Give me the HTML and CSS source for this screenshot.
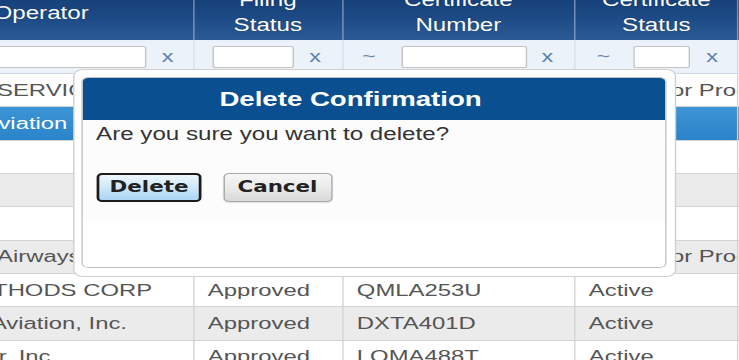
FILE: index.html
```html
<!DOCTYPE html>
<html lang="en">
<head>
<meta charset="utf-8">
<title>Operators</title>
<link rel="stylesheet" href="styles.css">
</head>
<body>
<div class="viewport">
  <div class="grid">
    <div class="row head">
      <div class="cell">Operator</div>
      <div class="cell">Filing<br>Status</div>
      <div class="cell">Certificate<br>Number</div>
      <div class="cell">Certificate<br>Status</div>
      <div class="cell"></div>
    </div>
    <div class="row filters">
      <div class="cell"><span class="finput f-op"></span><span class="fx x-op">x</span></div>
      <div class="cell"><span class="finput f-fs"></span><span class="fx x-fs">x</span></div>
      <div class="cell"><span class="ft t-cn">~</span><span class="finput f-cn"></span><span class="fx x-cn">x</span></div>
      <div class="cell"><span class="ft t-cs">~</span><span class="finput f-cs"></span><span class="fx x-cs">x</span></div>
      <div class="cell"></div>
    </div>
    <div class="row drow">
      <div class="cell">JET AIR SERVICES</div><div class="cell">Approved</div><div class="cell">QMLA118C</div><div class="cell">Ready for Processing</div><div class="cell"></div>
    </div>
    <div class="row drow sel">
      <div class="cell">Capital Aviation</div><div class="cell">Approved</div><div class="cell">DXTA220B</div><div class="cell">Active</div><div class="cell"></div>
    </div>
    <div class="row drow">
      <div class="cell">Delta</div><div class="cell">Approved</div><div class="cell">QMLA310K</div><div class="cell">Active</div><div class="cell"></div>
    </div>
    <div class="row drow alt">
      <div class="cell">Alpine</div><div class="cell">Approved</div><div class="cell">DXTA377F</div><div class="cell">Active</div><div class="cell"></div>
    </div>
    <div class="row drow">
      <div class="cell">Apex</div><div class="cell">Approved</div><div class="cell">LQMA402P</div><div class="cell">Active</div><div class="cell"></div>
    </div>
    <div class="row drow alt">
      <div class="cell">Western Airways</div><div class="cell">Approved</div><div class="cell">QMLA219R</div><div class="cell">Ready for Processing</div><div class="cell"></div>
    </div>
    <div class="row drow">
      <div class="cell">NAV METHODS CORP</div><div class="cell">Approved</div><div class="cell">QMLA253U</div><div class="cell">Active</div><div class="cell"></div>
    </div>
    <div class="row drow alt">
      <div class="cell">Eastern Aviation, Inc.</div><div class="cell">Approved</div><div class="cell">DXTA401D</div><div class="cell">Active</div><div class="cell"></div>
    </div>
    <div class="row drow">
      <div class="cell">Sky Rider, Inc.</div><div class="cell">Approved</div><div class="cell">LQMA488T</div><div class="cell">Active</div><div class="cell"></div>
    </div>
  </div>

  <div class="dialog">
    <div class="panel">
      <div class="title">Delete Confirmation</div>
      <div class="content">
        <p class="msg">Are you sure you want to delete?</p>
        <div class="buttons">
          <button class="btn btn-delete" type="button">Delete</button>
          <button class="btn btn-cancel" type="button">Cancel</button>
        </div>
      </div>
    </div>
  </div>
</div>
</body>
</html>
```

FILE: styles.css
```css
html, body {
  margin: 0;
  padding: 0;
  background: #fff;
  overflow: hidden;
}
body {
  width: 739px;
  height: 360px;
  font-family: "Liberation Sans", Arial, sans-serif;
}

/* the source screenshot is horizontally stretched; reproduce it */
.viewport {
  position: relative;
  width: 535.5px;
  height: 360px;
  overflow: hidden;
  transform: scaleX(1.38);
  transform-origin: 0 0;
}

.grid {
  --cols: 220.6px 108px 168.1px 118.8px 120px;
  margin: -14px 0 0 -80px;
  width: 735.5px;
}
.row {
  display: grid;
  grid-template-columns: var(--cols);
}
.cell {
  box-sizing: border-box;
  border-right: 1px solid #d3d3d3;
  display: flex;
  align-items: center;
  overflow: hidden;
  white-space: nowrap;
  min-width: 0;
}

/* header */
.head {
  height: 54px;
  background: linear-gradient(180deg, #123a72 0%, #1c4984 55%, #2b5b94 100%);
}
.head .cell {
  justify-content: center;
  text-align: center;
  color: #fff;
  font-size: 17.5px;
  line-height: 25px;
  padding: 2px 0;
  border-right-color: rgba(185, 202, 224, 0.6);
  text-shadow: 0 0 1px rgba(0, 0, 0, 0.35);
}

/* filter toolbar */
.filters {
  height: 34px;
  box-sizing: border-box;
  background: #ebf2f9;
  border-bottom: 1px solid #d0d9e4;
}
.filters .cell {
  border-right-color: #d7e0ea;
}
.finput {
  flex: none;
  box-sizing: border-box;
  height: 22px;
  background: #fff;
  border: 1px solid #c4c4c4;
  border-radius: 2px;
}
.fx, .ft {
  flex: none;
  text-align: center;
  font-size: 17px;
  line-height: 20px;
}
.fx { color: #5680b3; }
.ft { color: #6a86a9; }

.f-op { margin-left: 10px; width: 175.8px; }
.x-op { width: 31.2px; }
.f-fs { margin-left: 13px; width: 59.4px; }
.x-fs { width: 30.6px; }
.t-cn { width: 37.4px; }
.f-cn { margin-left: 5.3px; width: 90.6px; }
.x-cn { width: 29.4px; }
.t-cs { width: 41px; }
.f-cs { margin-left: 1.7px; width: 40.6px; }
.x-cs { width: 32px; }

/* data rows */
.drow {
  height: 33.33px;
  box-sizing: border-box;
  border-bottom: 1px solid #d4d4d4;
  background: #fff;
  color: #555;
  font-size: 17.3px;
}
.drow .cell {
  padding-left: 10px;
}
.drow.alt {
  background: #ebebeb;
}
.drow.sel {
  background: linear-gradient(180deg, #3d94d4 0%, #2a84c9 100%);
  color: #fff;
}

/* confirmation dialog (overlay) */
.dialog {
  position: absolute;
  left: 52.9px;
  top: 69px;
  width: 437px;
  height: 208px;
  box-sizing: border-box;
  padding: 7px 5.6px 8px 5.5px;
  background: #fff;
  border: 1px solid #cfcfcf;
  border-radius: 7px;
}
.panel {
  height: 100%;
  box-sizing: border-box;
  border: 1px solid #c2c2c2;
  border-radius: 5px;
  overflow: hidden;
  display: flex;
  flex-direction: column;
  background: #fff;
}
.title {
  flex: none;
  height: 42px;
  line-height: 42px;
  background: #0a4f90;
  color: #fff;
  font-weight: bold;
  font-size: 20px;
  text-align: center;
  padding-right: 34.7px;
}
.content {
  flex: 1;
  padding: 3.8px 9.2px 0;
  background: linear-gradient(180deg, #fcfcfc 0, #fcfcfc 100px, #fff 101px);
}
.msg {
  margin: 0;
  font-size: 17.5px;
  line-height: 20px;
  color: #333;
}
.buttons {
  display: flex;
  gap: 15.2px;
  margin-top: 29.2px;
}
.btn {
  box-sizing: border-box;
  height: 29px;
  padding: 0;
  font-family: "DejaVu Sans", sans-serif;
  font-weight: bold;
  font-size: 15.5px;
  color: #222;
  border-radius: 4px;
  cursor: pointer;
}
.btn-delete {
  width: 76.8px;
  border: 2px solid #1c1c1c;
  background: linear-gradient(180deg, #eef7fd 0%, #cfe8f9 50%, #a9d5f3 100%);
}
.btn-cancel {
  width: 79px;
  border: 1px solid #a8a8a8;
  background: linear-gradient(180deg, #f7f7f7 0%, #e9e9e9 55%, #d9d9d9 100%);
  box-shadow: 0 1px 1px rgba(0, 0, 0, 0.12);
}
```
